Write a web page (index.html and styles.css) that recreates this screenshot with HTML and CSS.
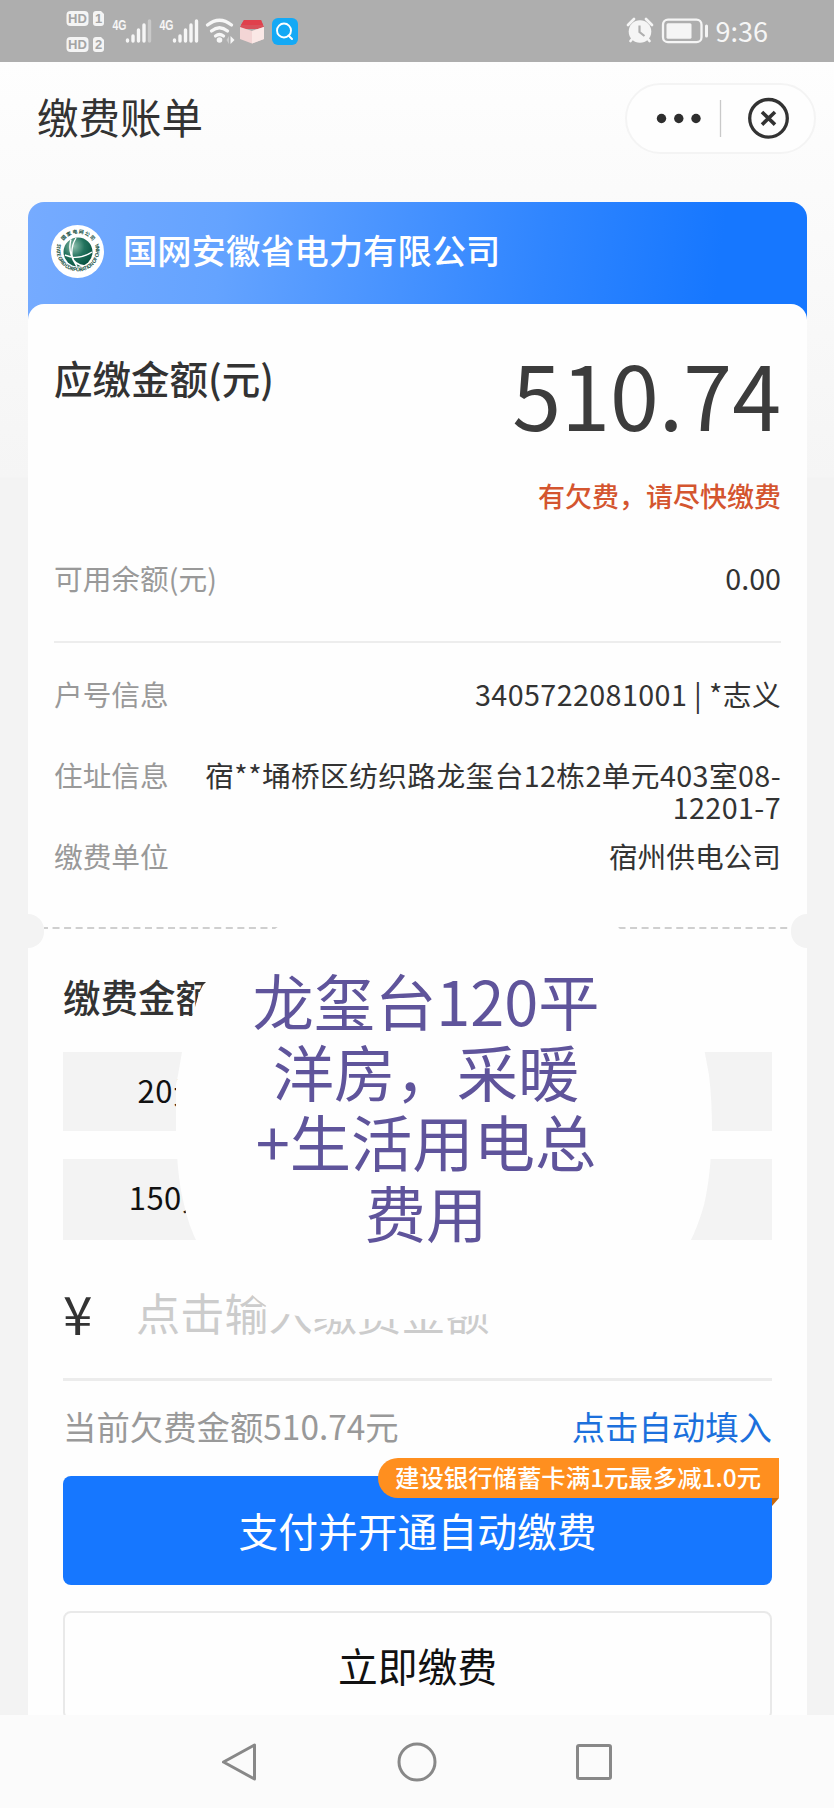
FILE: index.html
```html
<!DOCTYPE html>
<html lang="zh-CN">
<head>
<meta charset="utf-8">
<title>缴费账单</title>
<link rel="stylesheet" href="styles.css">
</head>
<body>
<div class="screen">
  <div class="status">
    <svg class="status-left" width="240" height="62" viewBox="60 0 240 62">
      <g fill="#f4f4f4">
        <rect x="66.500" y="11" width="22" height="15" rx="4"/>
        <path d="M96 11h5l3 3v9a3 3 0 0 1-3 3h-5a3 3 0 0 1-3-3v-9a3 3 0 0 1 3-3z"/>
        <rect x="66.500" y="37" width="22" height="15" rx="4"/>
        <path d="M96 37h5l3 3v9a3 3 0 0 1-3 3h-5a3 3 0 0 1-3-3v-9a3 3 0 0 1 3-3z"/>
      </g>
      <g class="badge-text">
        <text x="77.500" y="23" text-anchor="middle">HD</text><text x="98.500" y="23" text-anchor="middle">1</text>
        <text x="77.500" y="49" text-anchor="middle">HD</text><text x="98.500" y="49" text-anchor="middle">2</text>
      </g>
      <g class="net-text"><text x="112.500" y="30" textLength="14" lengthAdjust="spacingAndGlyphs">4G</text><text x="159.500" y="30" textLength="14" lengthAdjust="spacingAndGlyphs">4G</text></g>
      <g stroke="#f6f6f6" stroke-width="3.400" stroke-linecap="round">
        <path d="M127.500 41v-1M133 41v-5M138.500 41v-11M144 41v-16"/>
        <path stroke="#c9c9c9" d="M149.500 41v-20"/>
        <path d="M174.500 41v-1M180 41v-5M185.500 41v-11M191 41v-16M196.500 41v-20"/>
      </g>
      <g fill="none" stroke="#f6f6f6" stroke-width="3.300" stroke-linecap="round">
        <path d="M207.500 25q12-9.500 24 0M211.500 31q8-6.500 16 0M215.500 36q4-3 8 0"/>
      </g>
      <circle cx="219.500" cy="40" r="2.800" fill="#f6f6f6"/>
      <path d="M230.500 36l4 4-4 4z" fill="#f6f6f6"/><path d="M229 36l-2.500 4 2.500 4z" fill="#ccc"/>
      <path d="M240 27l4-7h17l3 7-2 2h-20z" fill="#d9505a"/>
      <path d="M244 20h17l2 5h-22z" fill="#e0404c"/>
      <path d="M240 27l12 4 12-4v12l-12 4.500-12-4.500z" fill="#f3d5d5"/>
      <path d="M252 31l12-4v12l-12 4.500z" fill="#fae8e6"/>
      <rect x="272" y="18" width="26" height="27" rx="6" fill="#14a9f5"/>
      <circle cx="284" cy="30.500" r="7" fill="none" stroke="#fff" stroke-width="1.900"/><path d="M288.500 35.500l3.500 3.500" stroke="#fff" stroke-width="2" stroke-linecap="round"/>
    </svg>
    <div class="status-right">
      <svg width="88" height="32" viewBox="622 15.500 88 32">
        <circle cx="640" cy="32" r="11.300" fill="#f5f5f5"/>
        <path d="M628 25.500l6-6M652 25.500l-6-6M632.500 39l-2 2.500M647.500 39l2 2.500" stroke="#f5f5f5" stroke-width="2.700" stroke-linecap="round" fill="none"/>
        <path d="M639.500 26v6.500l5 4" stroke="#aeaeae" stroke-width="2.200" fill="none"/>
        <rect x="663" y="20.200" width="38.500" height="22.500" rx="5" fill="none" stroke="#f5f5f5" stroke-width="2.300"/>
        <rect x="666.500" y="23.700" width="25" height="15.500" rx="1.500" fill="#f5f5f5"/>
        <rect x="705" y="25" width="3" height="13" rx="1.500" fill="#f5f5f5"/>
      </svg>
      <span class="clock">9:36</span>
    </div>
  </div>

  <div class="page">
    <header class="topbar">
      <h1>缴费账单</h1>
      <div class="capsule">
        <svg width="187" height="67" viewBox="627 84.500 187 67">
          <g fill="#2e2e2e"><circle cx="661.500" cy="118" r="4.700"/><circle cx="678.800" cy="118" r="4.700"/><circle cx="696" cy="118" r="4.700"/></g>
          <path d="M720.500 99.500v37" stroke="#c9c9c9" stroke-width="1.300"/>
          <circle cx="768.500" cy="117.800" r="18.800" fill="none" stroke="#333" stroke-width="3.300"/>
          <path d="M762 111.500l13 12.600M775 111.500l-13 12.600" stroke="#333" stroke-width="3.600"/>
        </svg>
      </div>
    </header>

    <section class="card">
      <div class="company">
        <svg class="logo" width="53" height="53" viewBox="0 0 53 53">
          <defs>
            <radialGradient id="globe" cx=".35" cy=".3" r=".75"><stop offset="0" stop-color="#8fbfae"/><stop offset=".5" stop-color="#23735e"/><stop offset="1" stop-color="#07513f"/></radialGradient>
            <path id="ring-top" d="M9 26.500a18 18 0 0 1 36 0"/>
            <path id="ring-bottom" d="M7 17a21.500 21.500 0 1 0 40 0"/>
          </defs>
          <circle cx="26.500" cy="26.500" r="26.500" fill="#fff"/>
          <circle cx="27" cy="27" r="14.500" fill="url(#globe)"/>
          <g fill="none" stroke="#fff" stroke-width="1.400"><path d="M20 14.500q-4 13 6 27M14 30q13 6 27-3M25 13q-5 8-4 18 2 9 13 10"/></g>
          <text class="logo-text"><textPath href="#ring-top" startOffset="20%" textLength="34">国家电网公司</textPath></text>
          <text class="logo-text"><textPath href="#ring-bottom" startOffset="2%" textLength="80">STATE GRID CORPORATION OF CHINA</textPath></text>
        </svg>
        <span>国网安徽省电力有限公司</span>
      </div>

      <div class="panel">
        <div class="bill">
          <div class="row due"><span class="due-label">应缴金额(元)</span><span class="due-value">510.74</span></div>
          <div class="warning">有欠费，请尽快缴费</div>
          <div class="row balance"><span class="label">可用余额(元)</span><span>0.00</span></div>
          <div class="divider"></div>
          <div class="row account"><span class="label">户号信息</span><span class="number">3405722081001 | *志义</span></div>
          <div class="row address"><span class="label">住址信息</span><span class="number">宿**埇桥区纺织路龙玺台12栋2单元403室08-<br>12201-7</span></div>
          <div class="row unit"><span class="label">缴费单位</span><span>宿州供电公司</span></div>
        </div>

        <div class="tear">
          <i class="notch"></i>
          <svg class="dashes" width="747" height="2"><path d="M-3 1H747" stroke="#cfcfcf" stroke-width="2" stroke-dasharray="7 4.550"/></svg>
          <i class="notch notch-right"></i>
        </div>

        <div class="pay">
          <svg class="blob" width="560" height="410" viewBox="170 920 560 410">
            <path d="M287 920H604L640 940 700 1030Q705 1052 709 1075 712 1100 712 1131 711 1175 704 1205 698 1226 690 1242L560 1305 470 1316 440 1319H315L275 1312 258 1300 200 1248Q188 1226 183 1200 177 1175 176 1131V1085L178 1075 182 1052 195 1007 199 993 203 985 210 978Z" fill="#fefefe"/>
          </svg>
          <p class="note">龙玺台120平<br>洋房，采暖<br>+生活用电总<br>费用</p>
          <h2>缴费金额</h2>
          <div class="amounts">
            <div class="amount">20元</div><div class="amount"></div><div class="amount"></div>
            <div class="amount">150元</div><div class="amount"></div><div class="amount"></div>
          </div>
          <div class="entry"><span class="yen">¥</span><span class="placeholder">点击输入缴费金额</span></div>
          <div class="row hint"><span>当前欠费金额510.74元</span><a>点击自动填入</a></div>
          <div class="btn primary">支付并开通自动缴费
            <div class="promo">建设银行储蓄卡满1元最多减1.0元</div>
          </div>
          <div class="btn secondary">立即缴费</div>
        </div>
      </div>
    </section>
  </div>

  <nav class="navbar">
    <svg width="42" height="42" viewBox="0 0 42 42"><path d="M35.500 4v34L4.500 21z"/></svg>
    <svg width="42" height="42" viewBox="0 0 42 42"><circle cx="21" cy="21" r="18"/></svg>
    <svg width="42" height="42" viewBox="0 0 42 42"><rect x="4.500" y="4.500" width="33" height="33" rx="1.500"/></svg>
  </nav>
</div>
</body>
</html>
```
FILE: styles.css
```css
* { box-sizing: border-box; }
body {
  margin: 0;
  font-family: "Noto Sans CJK SC", sans-serif;
  color: #333;
}
h1, h2, p { margin: 0; font-weight: 400; }
.screen {
  width: 834px;
  height: 1808px;
  display: flex;
  flex-direction: column;
  overflow: hidden;
}

.status {
  height: 62px;
  flex: none;
  display: flex;
  justify-content: space-between;
  background: #aeaeae;
  padding: 0 66px 0 60px;
}
.badge-text { font: 700 13px "Liberation Sans", sans-serif; fill: #a4a4a4; }
.net-text { font: 700 15px "Liberation Sans", sans-serif; fill: #f6f6f6; }
.status-right { display: flex; align-items: center; gap: 6px; }
.clock { font: 400 27px/62px "Noto Sans CJK SC", sans-serif; color: #f6f6f6; }

.page {
  height: 1653px;
  flex: none;
  overflow: hidden;
  background: linear-gradient(#fefefe 0, #fcfcfc 80px, #f5f5f5 415px, #f3f3f3 416px);
}
.topbar {
  height: 112px;
  display: flex;
  align-items: center;
  justify-content: space-between;
  padding: 0 18px 0 37px;
}
.topbar h1 { font-size: 41.5px; line-height: 60px; padding-bottom: 5px; }
.capsule {
  width: 191px;
  height: 71px;
  border: 2px solid #f4f4f4;
  border-radius: 36px;
  background: #fefefe;
}
.capsule svg { display: block; }

.card {
  margin: 28px 27px 0 28px;
  border-radius: 16px 16px 0 0;
  background: linear-gradient(97deg, #76abff 0, #64a3ff 25%, #2f85ff 66%, #1677ff 88%) 0 0 / 100% 130px no-repeat;
}
.company {
  height: 102px;
  display: flex;
  align-items: center;
  gap: 19px;
  padding: 0 0 4px 23px;
  color: #fff;
  font-size: 34.3px;
  font-weight: 500;
}
.company span { line-height: 50px; padding-bottom: 4px; }
.logo-text { font-size: 5px; font-weight: 700; fill: #144f42; }

.panel { background: #fefefe; border-radius: 16px 16px 0 0; height: 1450px; }
.bill { padding: 44px 26px 0; font-size: 28.7px; line-height: 32px; color: #333; }
.row { display: flex; justify-content: space-between; }
.row > :last-child { text-align: right; }
.label { color: #999; }
.number { letter-spacing: .4px; }
.due { line-height: 88px; }
.due-label { font-size: 38.5px; line-height: 58px; font-weight: 500; }
.due-value { font-size: 88px; line-height: 90px; height: 88px; color: #3c3c3c; }
.warning {
  margin-top: 40px;
  text-align: right;
  font-size: 27px;
  line-height: 40px;
  font-weight: 500;
  color: #d4552f;
}
.balance { margin-top: 42px; line-height: 40px; }
.divider { margin-top: 43px; height: 2px; background: #ededed; }
.account { margin-top: 35px; }
.address { margin-top: 49px; }
.unit { margin-top: 17px; }

.tear {
  margin-top: 42px;
  height: 34px;
  display: flex;
  justify-content: space-between;
}
.notch { width: 16px; background: #f3f3f3; border-radius: 0 17px 17px 0; }
.notch-right { border-radius: 17px 0 0 17px; }
.dashes { margin-top: 13px; }

.pay { position: relative; padding: 22px 35px 0; }
.blob { position: absolute; left: 142px; top: -28px; z-index: 1; }
.note {
  position: absolute;
  z-index: 2;
  left: 198px;
  top: 17px;
  width: 400px;
  text-align: center;
  font-size: 61.3px;
  line-height: 70.7px;
  color: #5f549b;
}
.pay h2 { font-size: 37.5px; line-height: 52px; height: 50px; font-weight: 500; }
.amounts {
  margin-top: 32px;
  display: grid;
  grid-template-columns: repeat(3, 216px);
  grid-template-rows: 79px 81px;
  justify-content: space-between;
  row-gap: 28px;
}
.amount {
  background: #f3f3f3;
  text-align: center;
  font-size: 31px;
  letter-spacing: .5px;
  line-height: 75px;
  color: #111;
}
.entry {
  margin-top: 42px;
  height: 99px;
  display: flex;
  border-bottom: 3px solid #ececec;
  line-height: 61px;
}
.yen { width: 73px; font-size: 53px; color: #333; }
.placeholder { font-size: 44.2px; color: #ccc; }
.hint { margin-top: 20px; font-size: 33.4px; line-height: 50px; color: #999; }
.hint a { color: #1c70dc; }
.btn {
  border-radius: 8px;
  text-align: center;
  font-size: 39.8px;
}
.primary {
  position: relative;
  margin-top: 25px;
  height: 109px;
  line-height: 107px;
  color: #fff;
  background: #1677ff;
}
.promo {
  position: absolute;
  right: -7px;
  top: -18px;
  width: 401px;
  height: 40px;
  padding-left: 17px;
  text-align: left;
  font-size: 24.4px;
  line-height: 37px;
  font-weight: 500;
  border-radius: 20px 0 0 20px;
  background: #ff8f1f;
}
.promo::after {
  content: "";
  position: absolute;
  right: 0;
  top: 40px;
  width: 7px;
  height: 8px;
  background: #c9690b;
  clip-path: polygon(0 0, 100% 0, 0 100%);
}
.secondary {
  margin-top: 26px;
  height: 109px;
  line-height: 104px;
  color: #111;
  border: 2px solid #e9e9e9;
}

.navbar {
  flex: 1;
  display: flex;
  justify-content: center;
  align-items: center;
  gap: 135px;
  background: #fbfbfb;
}
.navbar svg { fill: none; stroke: #888; stroke-width: 3; stroke-linejoin: round; }
```
